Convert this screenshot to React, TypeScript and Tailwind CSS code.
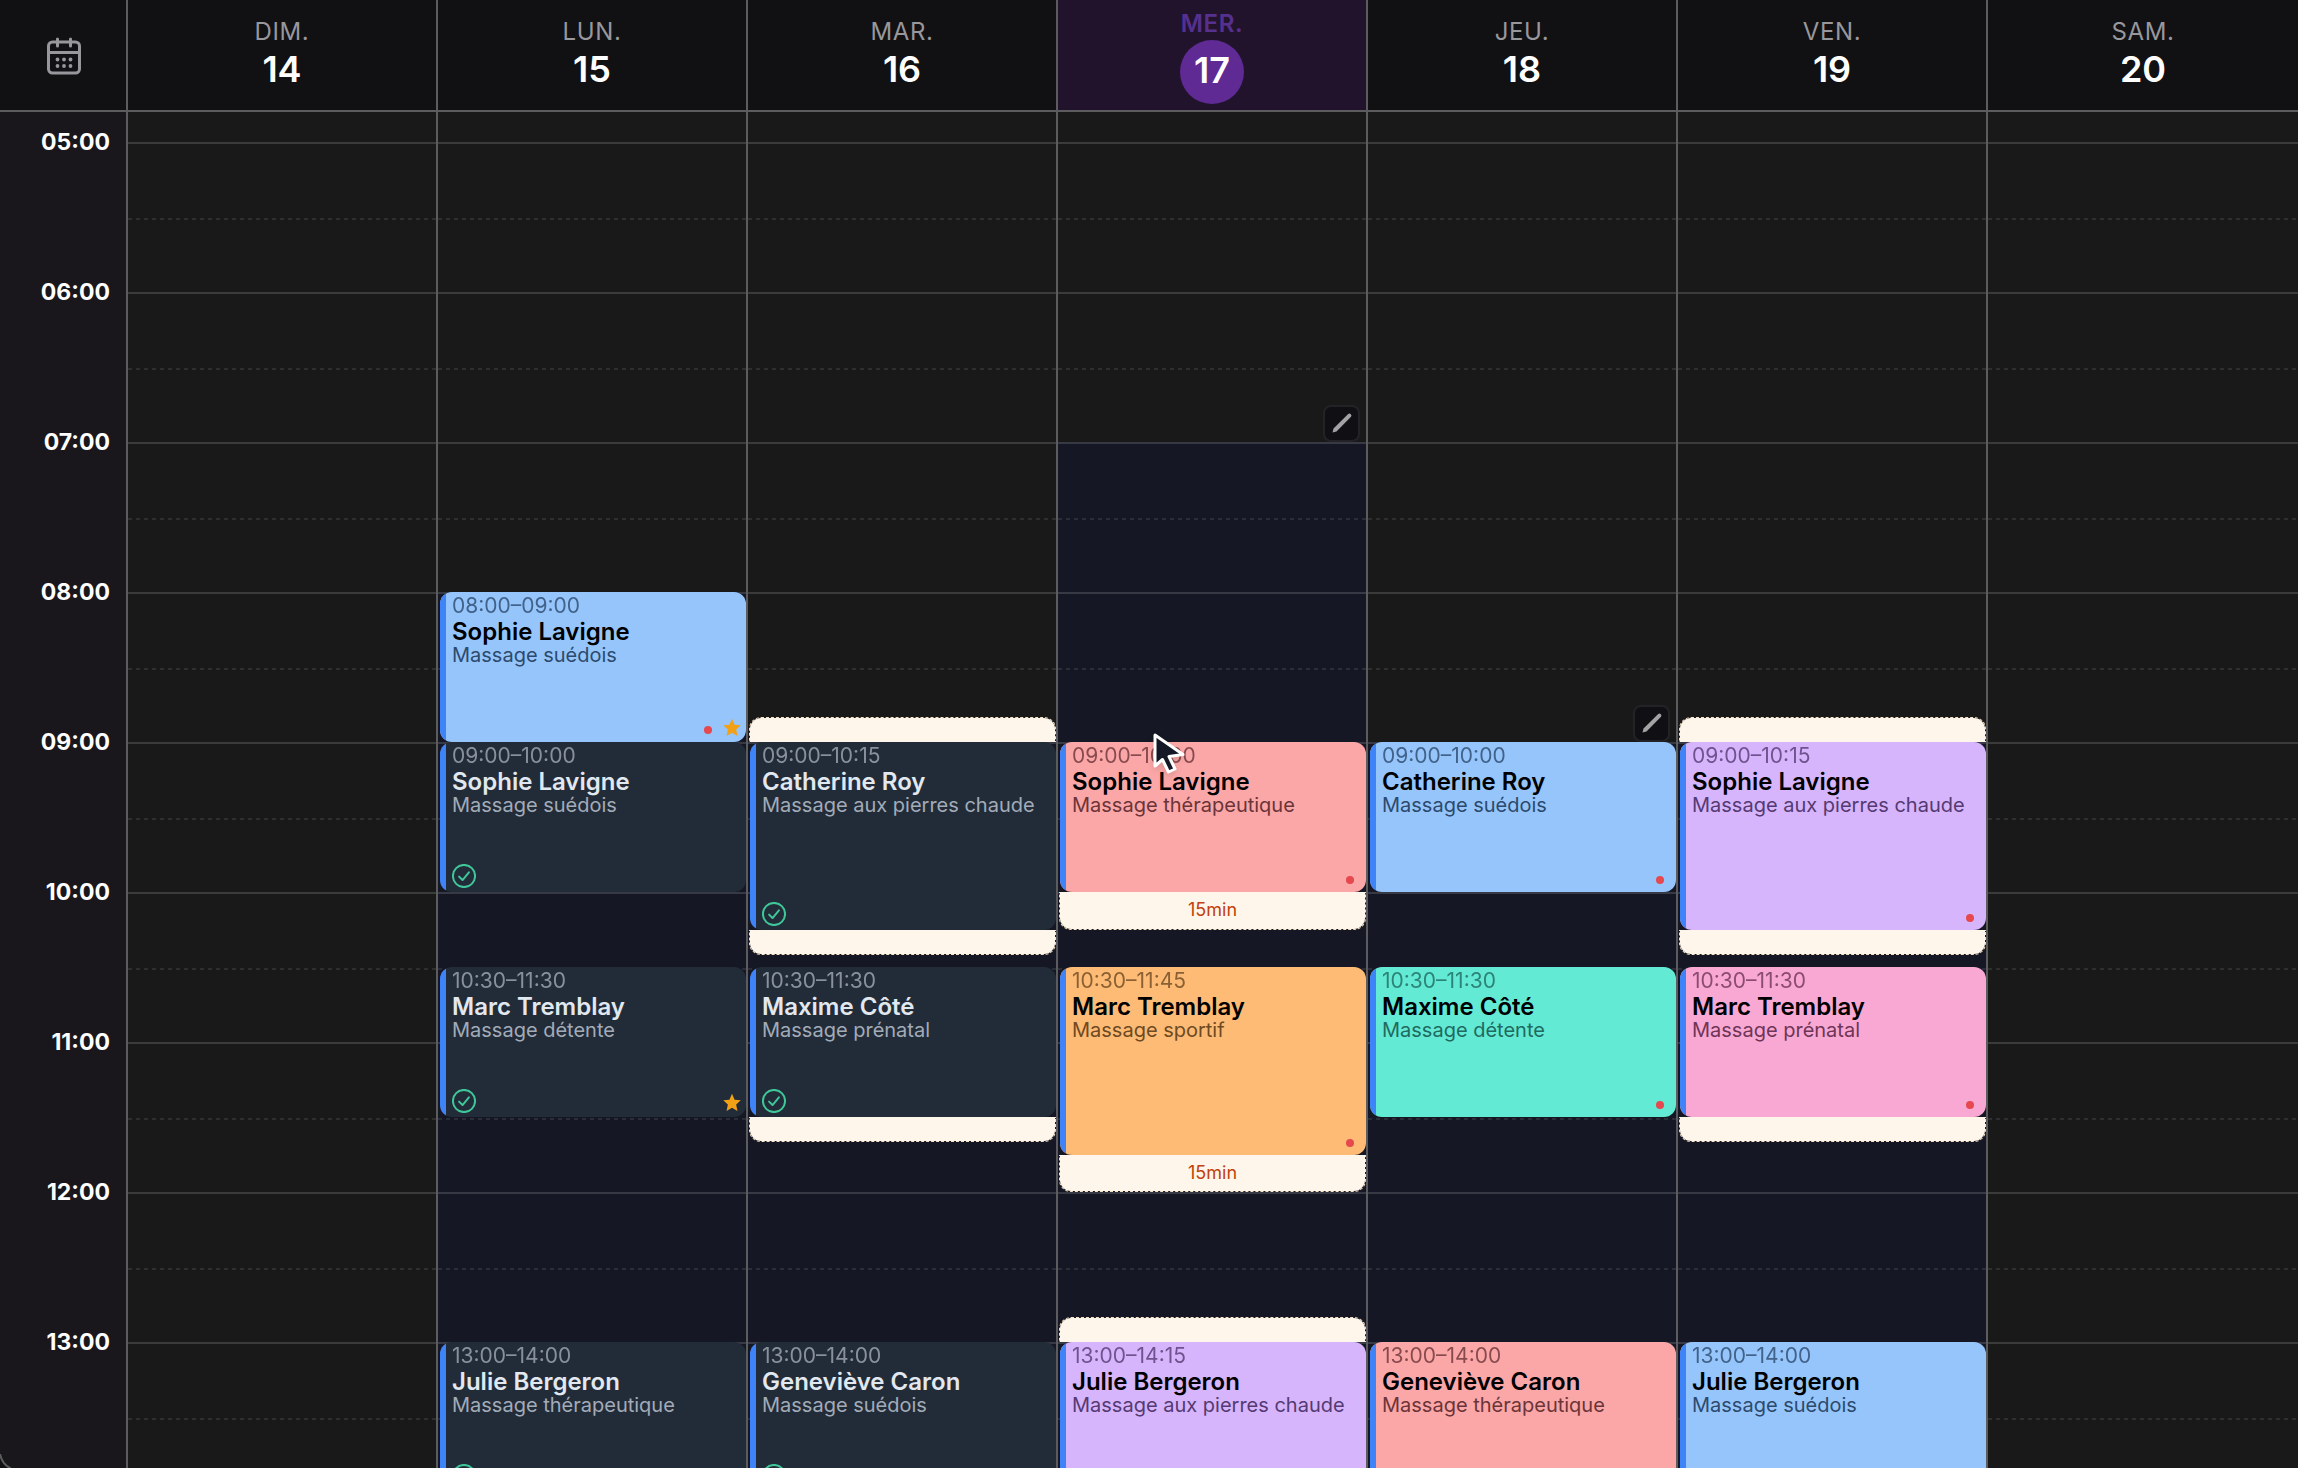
const START_HOUR = 5;
const END_HOUR = 14;
const ROW_MINUTES = 5;

type Tone = 'blue' | 'red' | 'purple' | 'orange' | 'teal' | 'pink' | 'done';

type Appointment = {
  start: string;
  end: string;
  client: string;
  service: string;
  tone: Tone;
  unpaid?: boolean;
  starred?: boolean;
  bufferBefore?: number;
  bufferAfter?: number;
};

type Day = {
  name: string;
  date: number;
  today?: boolean;
  opensAt?: string;
  editable?: boolean;
  appointments: Appointment[];
};

const tones: Record<Tone, string> = {
  blue: 'bg-[#96c5fc] text-[#2c4a6c]',
  red: 'bg-[#fba7a7] text-[#6b3438]',
  purple: 'bg-[#d6b5fd] text-[#553a72]',
  orange: 'bg-[#fdbb76] text-[#6e4a22]',
  teal: 'bg-[#63ead4] text-[#1f6a60]',
  pink: 'bg-[#f9a8d3] text-[#6e3557]',
  done: 'bg-[#222c38] text-[#a3abb8]',
};

const days: Day[] = [
  { name: 'DIM.', date: 14, appointments: [] },
  {
    name: 'LUN.',
    date: 15,
    opensAt: '08:00',
    appointments: [
      { start: '08:00', end: '09:00', client: 'Sophie Lavigne', service: 'Massage suédois', tone: 'blue', unpaid: true, starred: true },
      { start: '09:00', end: '10:00', client: 'Sophie Lavigne', service: 'Massage suédois', tone: 'done' },
      { start: '10:30', end: '11:30', client: 'Marc Tremblay', service: 'Massage détente', tone: 'done', starred: true },
      { start: '13:00', end: '14:00', client: 'Julie Bergeron', service: 'Massage thérapeutique', tone: 'done' },
    ],
  },
  {
    name: 'MAR.',
    date: 16,
    opensAt: '09:00',
    appointments: [
      { start: '09:00', end: '10:15', client: 'Catherine Roy', service: 'Massage aux pierres chaude', tone: 'done', bufferBefore: 10, bufferAfter: 10 },
      { start: '10:30', end: '11:30', client: 'Maxime Côté', service: 'Massage prénatal', tone: 'done', bufferAfter: 10 },
      { start: '13:00', end: '14:00', client: 'Geneviève Caron', service: 'Massage suédois', tone: 'done' },
    ],
  },
  {
    name: 'MER.',
    date: 17,
    today: true,
    opensAt: '07:00',
    editable: true,
    appointments: [
      { start: '09:00', end: '10:00', client: 'Sophie Lavigne', service: 'Massage thérapeutique', tone: 'red', unpaid: true, bufferAfter: 15 },
      { start: '10:30', end: '11:45', client: 'Marc Tremblay', service: 'Massage sportif', tone: 'orange', unpaid: true, bufferAfter: 15 },
      { start: '13:00', end: '14:15', client: 'Julie Bergeron', service: 'Massage aux pierres chaude', tone: 'purple', bufferBefore: 10 },
    ],
  },
  {
    name: 'JEU.',
    date: 18,
    opensAt: '09:00',
    editable: true,
    appointments: [
      { start: '09:00', end: '10:00', client: 'Catherine Roy', service: 'Massage suédois', tone: 'blue', unpaid: true },
      { start: '10:30', end: '11:30', client: 'Maxime Côté', service: 'Massage détente', tone: 'teal', unpaid: true },
      { start: '13:00', end: '14:00', client: 'Geneviève Caron', service: 'Massage thérapeutique', tone: 'red' },
    ],
  },
  {
    name: 'VEN.',
    date: 19,
    opensAt: '09:00',
    appointments: [
      { start: '09:00', end: '10:15', client: 'Sophie Lavigne', service: 'Massage aux pierres chaude', tone: 'purple', unpaid: true, bufferBefore: 10, bufferAfter: 10 },
      { start: '10:30', end: '11:30', client: 'Marc Tremblay', service: 'Massage prénatal', tone: 'pink', unpaid: true, bufferAfter: 10 },
      { start: '13:00', end: '14:00', client: 'Julie Bergeron', service: 'Massage suédois', tone: 'blue' },
    ],
  },
  { name: 'SAM.', date: 20, appointments: [] },
];

const hours = Array.from({ length: END_HOUR - START_HOUR }, (_, i) => START_HOUR + i);

function toMinutes(time: string) {
  const [h, m] = time.split(':').map(Number);
  return h * 60 + m;
}

// Grid rows covered by a time range, one row per five minutes
function rows(from: number, to: number) {
  const line = (minutes: number) =>
    (Math.min(minutes, END_HOUR * 60) - START_HOUR * 60) / ROW_MINUTES + 1;
  return { gridRow: `${line(from)} / ${line(to)}` };
}

function CalendarIcon() {
  return (
    <svg viewBox="0 0 34 38" className="w-[34px] h-[38px]" fill="none" stroke="currentColor" strokeWidth="3" strokeLinecap="round">
      <rect x="1.5" y="5" width="31" height="31" rx="4" />
      <path d="M1.5 15.5h31M10.5 2v7M23.5 2v7" />
      <g fill="currentColor" stroke="none">
        <circle cx="10.5" cy="22.5" r="1.9" />
        <circle cx="17" cy="22.5" r="1.9" />
        <circle cx="23.5" cy="22.5" r="1.9" />
        <circle cx="10.5" cy="29" r="1.9" />
        <circle cx="17" cy="29" r="1.9" />
        <circle cx="23.5" cy="29" r="1.9" />
      </g>
    </svg>
  );
}

function CheckIcon() {
  return (
    <svg viewBox="2.25 2.25 19.5 19.5" className="size-6 text-[#3fc79a]" fill="none" stroke="currentColor" strokeWidth="1.6" strokeLinecap="round" strokeLinejoin="round">
      <circle cx="12" cy="12" r="9" />
      <path d="M8 12.500 10.800 15.300 16 9" />
    </svg>
  );
}

function Star() {
  return (
    <svg viewBox="0 0 24 24" className="size-5 text-[#f2a016]" fill="currentColor">
      <path d="M12 1l3.1 7 7.4.8-5.5 5.1 1.5 7.6-6.500-3.800-6.500 3.800 1.500-7.600L1.500 8.800l7.400-.8z" />
    </svg>
  );
}

function Pointer() {
  return (
    <svg viewBox="0 0 36 44" className="absolute left-[1152px] top-[732px] w-9 h-11 drop-shadow-md" fill="#141826" stroke="#fff" strokeWidth="3" strokeLinejoin="round">
      <path d="M3 3v31l7.500-6.500 6 12.500 6.500-3-6-12.500 14-2z" />
    </svg>
  );
}

function DayHeader({ day }: { day: Day }) {
  return (
    <div
      className={`flex flex-col items-center border-r-2 border-[#5c5c5e] last:border-r-0 ${
        day.today ? 'bg-[#22132c] pt-2' : 'pt-4'
      }`}
    >
      <span className={`text-2xl leading-8 tracking-wide ${day.today ? 'font-semibold text-[#56308f]' : 'text-[#98979c]'}`}>
        {day.name}
      </span>
      <span
        className={`text-4xl font-semibold text-white ${
          day.today ? 'flex size-16 items-center justify-center rounded-full bg-[#5f2a94] pb-1' : 'leading-[42px]'
        }`}
      >
        {day.date}
      </span>
    </div>
  );
}

function Buffer({ from, to, side }: { from: number; to: number; side: 'before' | 'after' }) {
  return (
    <div
      style={rows(from, to)}
      className={`col-start-1 ml-px flex items-center justify-center border border-dashed border-[#f6e2c4] bg-[#fef6ea] bg-clip-padding text-lg text-[#c2410c] ${
        side === 'before' ? 'rounded-t-xl border-b-0' : 'rounded-b-xl border-t-0'
      }`}
    >
      {to - from >= 15 && `${to - from}min`}
    </div>
  );
}

function AppointmentCard({ appointment }: { appointment: Appointment }) {
  const { start, end, client, service, tone, unpaid, starred } = appointment;
  const done = tone === 'done';
  return (
    <article
      style={rows(toMinutes(start), toMinutes(end))}
      className={`col-start-1 ml-0.5 flex overflow-hidden rounded-xl ${tones[tone]}`}
    >
      <div className="w-1.5 shrink-0 bg-[#3f83f8]" />
      <div className="flex min-w-0 grow flex-col pl-1.5 pt-0.5">
        <p className="text-[21px] leading-6 opacity-80 whitespace-nowrap">
          {start}–{end}
        </p>
        <h3 className={`text-2xl leading-7 font-semibold whitespace-nowrap ${done ? 'text-slate-200' : 'text-black'}`}>{client}</h3>
        <p className="text-xl leading-[18px] whitespace-nowrap">{service}</p>
        <div className="mt-auto flex items-end justify-between pb-1 pr-1">
          {done ? <CheckIcon /> : <span />}
          <div className="flex items-end gap-2.5">
            {unpaid && <span className={`mb-1 size-2 rounded-full bg-[#e5484d] ${starred ? '' : 'mr-2'}`} />}
            {starred && <Star />}
          </div>
        </div>
      </div>
    </article>
  );
}

function DayColumn({ day }: { day: Day }) {
  const opens = day.opensAt ? toMinutes(day.opensAt) : 0;
  return (
    <div className="border-r-2 border-[#5c5c5e] pt-[30px] last:border-r-0">
      <div className="grid h-[1350px] grid-cols-1 grid-rows-[repeat(108,minmax(0,1fr))]">
        {day.opensAt && <div style={rows(opens, END_HOUR * 60)} className="col-start-1 bg-[#151824]" />}
        {hours.map((hour) => (
          <div key={hour} style={rows(hour * 60, hour * 60 + 60)} className="col-start-1 border-t-2 border-white/15 pt-[74px]">
            <div className="h-0.5 bg-[repeating-linear-gradient(90deg,#ffffff18_0_4px,transparent_4px_8px)]" />
          </div>
        ))}
        {day.editable && (
          <button
            type="button"
            aria-label="Modifier les disponibilités"
            style={rows(opens - 15, opens)}
            className="col-start-1 mr-1.5 flex size-[37px] items-center justify-center justify-self-end rounded-lg border-2 border-[#232327] bg-[#101014] text-[#a3a3a6]"
          >
            <svg viewBox="0 0 22 22" className="size-[22px]" fill="currentColor">
              <path d="M1.500 20.500l1-4L17.200 2a2 2 0 0 1 2.800 2.800L5.500 19.500z" />
            </svg>
          </button>
        )}
        {day.appointments.map((a) => {
          const from = toMinutes(a.start);
          const to = toMinutes(a.end);
          return [
            a.bufferBefore && <Buffer key={`${a.start}-before`} from={from - a.bufferBefore} to={from} side="before" />,
            a.bufferAfter && <Buffer key={`${a.start}-after`} from={to} to={to + a.bufferAfter} side="after" />,
            <AppointmentCard key={a.start} appointment={a} />,
          ];
        })}
      </div>
    </div>
  );
}

export default function App() {
  return (
    <main className="relative h-screen overflow-hidden bg-[#191919] font-['Inter',sans-serif]">
      <header className="grid h-28 grid-cols-[128px_repeat(7,minmax(0,1fr))] border-b-2 border-[#5c5c5e] bg-[#111013]">
        <div className="flex items-center justify-center border-r-2 border-[#5c5c5e] pl-0.5 pt-0.5 text-[#98979c]">
          <button type="button" aria-label="Calendrier">
            <CalendarIcon />
          </button>
        </div>
        {days.map((day) => (
          <DayHeader key={day.date} day={day} />
        ))}
      </header>
      <div className="grid grid-cols-[128px_repeat(7,minmax(0,1fr))]">
        <div className="flex flex-col border-r-2 border-[#5c5c5e] bg-[#19171b] pt-3.5">
          {hours.map((hour) => (
            <time key={hour} className="h-[150px] pr-4 text-right text-[23px] font-bold leading-8 text-white">
              {String(hour).padStart(2, '0')}:00
            </time>
          ))}
        </div>
        {days.map((day) => (
          <DayColumn key={day.date} day={day} />
        ))}
      </div>
      <Pointer />
      {/* Rounded window corner */}
      <svg viewBox="0 0 12 14" className="absolute bottom-0 left-0 h-3.5 w-3" fill="#111013" stroke="#5c5c5e" strokeWidth="2">
        <path d="M-2 0H0Q2 10 10 14V16H-2z" />
      </svg>
    </main>
  );
}
